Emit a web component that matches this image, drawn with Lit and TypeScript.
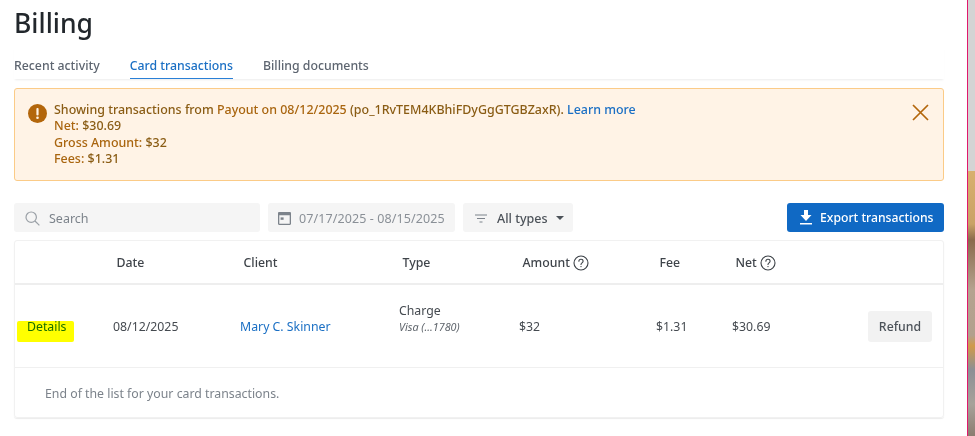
import { LitElement, html, css } from "lit";
import { customElement } from "lit/decorators.js";

const help = html`<svg class="help" viewBox="0 0 16 16" width="16" height="16" fill="none" stroke="#3b4046" stroke-width="1.1"><circle cx="8" cy="8" r="7"/><path d="M5.9 6.3C5.9 5 6.9 4.3 8 4.3c1.2 0 2.1.8 2.1 1.9 0 1.7-2.1 1.6-2.1 3.3" stroke-linecap="round"/><circle cx="8" cy="11.6" r=".7" fill="#3b4046" stroke="none"/></svg>`;

@customElement("app-root")
export class AppRoot extends LitElement {
  static styles = css`
    :host { display: block; font-family: "Noto Sans", "Open Sans", sans-serif; color: #3b4046; }
    .page { display: flex; height: 436px; width: 975px; overflow: hidden; background: #fff; }
    .main { width: 967px; flex: none; box-sizing: border-box; padding: 0 23px 0 14px; }
    .strip { flex: 1; display: flex; flex-direction: column; border-left: 1px solid #e0186c; }
    .gray { height: 171px; background: #d4d4d4; }
    .pic { flex: 1; background: linear-gradient(180deg, #d8b06e 0%, #c9a266 20%, #8a6a4c 26%, #b5a38f 45%, #b2a08e 62%, #d09a4a 66%, #8c8f95 75%, #a7a29a 88%, #8c7c70 100%); }
    h1 { margin: 0; height: 47px; font-size: 26.500px; line-height: 47px; font-weight: 500; color: #22272c; }
    .tabs { display: flex; gap: 30px; height: 32px; box-shadow: 0 2px 2px -1px #ececec; font-size: 12.300px; font-weight: 500; color: #5d6570; }
    .tab { display: flex; align-items: center; height: 32px; padding-top: 5px; box-sizing: border-box; }
    .tab.on { color: #1a6fc4; border-bottom: 1.500px solid #2a7fd6; }
    .alert { margin-top: 9px; height: 93px; box-sizing: border-box; border: 1px solid #fbcb87; border-radius: 3px; background: #fff3e6; display: flex; gap: 7px; padding: 13px 14px 0 13px; color: #a9650f; font-size: 12.450px; line-height: 16.300px; font-weight: 500; }
    .alert .body { flex: 1; }
    .alert .icon { margin-top: 2px; flex: none; }
    .dark { color: #8a5c14; }
    .link { color: #1a6fc4; }
    .close { margin-top: 2px; flex: none; }
    .toolbar { margin-top: 22px; display: flex; gap: 8px; height: 29px; font-size: 12.500px; }
    .field { background: #f5f5f5; border-radius: 3px; display: flex; align-items: center; box-sizing: border-box; color: #7c838b; padding-top: 1px; }
    .search { width: 246px; padding-left: 11px; gap: 9px; }
    .dates { width: 187px; padding-left: 10px; gap: 8px; color: #8a9097; letter-spacing: .1px; }
    .types { width: 110px; padding-left: 12px; gap: 10px; color: #4c5259; font-weight: 500; }
    .caret { width: 0; height: 0; border: 4px solid transparent; border-top: 4px solid #4c5259; border-bottom: 0; margin-left: -2px; }
    .grow { flex: 1; }
    .export { width: 157px; background: #1069c4; border-radius: 3px; color: #fff; font-weight: 500; font-size: 12.200px; display: flex; align-items: center; justify-content: flex-start; padding-left: 13px; box-sizing: border-box; gap: 8px; }
    .table { position: relative; margin-top: 8px; height: 178px; box-sizing: border-box; border: 1px solid #f1f1f1; border-radius: 3px; box-shadow: 0 1px 1px #ececec; font-size: 12.300px; }
    .grid { display: grid; grid-template-columns: 98px 127px 159px 120px 137px 76px 1fr auto; align-items: center; }
    .head { height: 44px; box-sizing: border-box; padding-top: 1px; border-bottom: 2px solid #eeeeee; font-weight: 500; color: #3f444a; }
    .head > span { padding-left: 3.500px; display: flex; align-items: center; gap: 3px; }
    .row { height: 82px; border-bottom: 1px solid #f0f0f0; color: #454a50; }
    .details { padding-left: 12px; color: #1a6fc4; }
    .client { color: #1a6fc4; }
    .type { line-height: 16px; padding-bottom: 14px; }
    .type i { display: block; font-size: 10.800px; color: #5f656c; }
    .refund { margin-right: 11px; width: 64px; height: 31px; border-radius: 3px; background: #f2f2f2; display: flex; align-items: center; justify-content: center; font-weight: 500; color: #4c5259; }
    .end { padding: 17px 0 0 30px; color: #7c838b; }
    .mark { position: absolute; left: 2px; top: 80px; width: 57px; height: 21px; background: #ffff00; mix-blend-mode: multiply; border-radius: 2px; }
  `;

  render() {
    return html`<div class="page">
      <div class="main">
        <h1>Billing</h1>
        <div class="tabs">
          <div class="tab">Recent activity</div>
          <div class="tab on">Card transactions</div>
          <div class="tab">Billing documents</div>
        </div>
        <div class="alert">
          <svg class="icon" width="19" height="19" viewBox="0 0 19 19"><circle cx="9.500" cy="9.500" r="9.500" fill="#b3660b"/><rect x="8.400" y="4" width="2.200" height="7.400" rx="1" fill="#fff3e6"/><circle cx="9.500" cy="13.800" r="1.300" fill="#fff3e6"/></svg>
          <div class="body">
            <div><span class="dark">Showing transactions from</span> Payout on 08/12/2025 <span class="dark">(po_1RvTEM4KBhiFDyGgGTGBZaxR).</span> <span class="link">Learn more</span></div>
            <div>Net: <span class="dark">$30.69</span></div>
            <div>Gross Amount: <span class="dark">$32</span></div>
            <div>Fees: <span class="dark">$1.31</span></div>
          </div>
          <svg class="close" width="17" height="17" viewBox="0 0 17 17" fill="none" stroke="#b3660b" stroke-width="1.700"><path d="M1 1l15 15M16 1L1 16"/></svg>
        </div>
        <div class="toolbar">
          <div class="field search">
            <svg width="15" height="15" viewBox="0 0 15 15" fill="none" stroke="#9aa0a6" stroke-width="1.200"><circle cx="6.200" cy="6.200" r="5.200"/><path d="M10 10l4.400 4.400"/></svg>
            Search
          </div>
          <div class="field dates">
            <svg width="13" height="13" viewBox="0 0 13 13"><path fill="#7c838b" fill-rule="evenodd" d="M0 1.200C0 .5.500 0 1.200 0h10.600c.7 0 1.200.5 1.200 1.200v10.600c0 .7-.5 1.200-1.200 1.200H1.200C.5 13 0 12.500 0 11.800zM1.300 3.300v8.400h10.400V3.300z"/><rect x="2.600" y="5.400" width="3" height="2.400" fill="#7c838b"/></svg>
            07/17/2025 - 08/15/2025
          </div>
          <div class="field types">
            <svg width="12" height="9" viewBox="0 0 12 9" stroke="#7c838b" stroke-width="1.200"><path d="M0 1h12M2 4.500h8M4.500 8h3"/></svg>
            All types
            <span class="caret"></span>
          </div>
          <div class="grow"></div>
          <div class="export">
            <svg width="12" height="15" viewBox="0 0 12 15" fill="#fff"><path d="M4 0h4v5h3.500L6 11 .5 5H4z"/><rect y="13" width="12" height="1.500"/></svg>
            Export transactions
          </div>
        </div>
        <div class="table">
          <div class="grid head">
            <span></span><span>Date</span><span>Client</span><span>Type</span>
            <span>Amount ${help}</span><span>Fee</span><span>Net ${help}</span><span></span>
          </div>
          <div class="grid row">
            <span class="details">Details</span>
            <span>08/12/2025</span>
            <span class="client">Mary C. Skinner</span>
            <span class="type">Charge<i>Visa (...1780)</i></span>
            <span>$32</span>
            <span>$1.31</span>
            <span>$30.69</span>
            <span class="refund">Refund</span>
          </div>
          <div class="end">End of the list for your card transactions.</div>
          <div class="mark"></div>
        </div>
      </div>
      <div class="strip"><div class="gray"></div><div class="pic"></div></div>
    </div>`;
  }
}
